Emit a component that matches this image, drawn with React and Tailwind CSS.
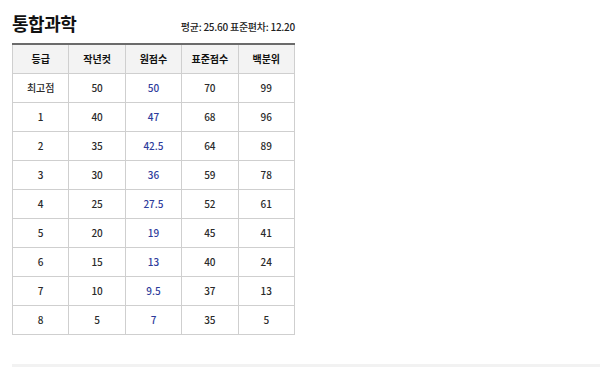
import React from 'react';

const rows = [
    ['최고점', '50', '50', '70', '99'],
    ['1', '40', '47', '68', '96'],
    ['2', '35', '42.5', '64', '89'],
    ['3', '30', '36', '59', '78'],
    ['4', '25', '27.5', '52', '61'],
    ['5', '20', '19', '45', '41'],
    ['6', '15', '13', '40', '24'],
    ['7', '10', '9.5', '37', '13'],
    ['8', '5', '7', '35', '5'],
];

const heads = ['등급', '작년컷', '원점수', '표준점수', '백분위'];

const App = () => {
    return (
        <div className="w-[600px] h-[367px] bg-white overflow-hidden font-['Noto_Sans_CJK_KR','Noto_Sans',sans-serif] text-[#222]">
            <div className="pl-3 w-[295px]">
                <div className="flex items-end justify-between h-[34px]">
                    <h2 className="text-[18px] font-bold leading-none tracking-tight text-[#111] mb-[2px]">통합과학</h2>
                    <p className="text-[10px] font-medium leading-none text-[#222] mb-[2px] tracking-tight">평균: 25.60 표준편차: 12.20</p>
                </div>
                <table className="mt-[9px] w-[283px] border-collapse table-fixed text-[10px] font-medium text-center">
                    <thead>
                        <tr className="bg-[#f3f3f3] border-t-2 border-t-[#6b6b6b] h-[29px]">
                            {heads.map((h) => (
                                <th key={h} className="border border-[#cfcfcf] border-t-[#6b6b6b] border-t-2 font-bold text-[#111]">{h}</th>
                            ))}
                        </tr>
                    </thead>
                    <tbody>
                        {rows.map((r) => (
                            <tr key={r[0]} className="h-[29px]">
                                {r.map((c, i) => (
                                    <td key={i} className={i === 2 ? 'border border-[#cfcfcf] text-[#2e3c9c]' : 'border border-[#cfcfcf] text-[#2a2a2a]'}>{c}</td>
                                ))}
                            </tr>
                        ))}
                    </tbody>
                </table>
            </div>
            <div className="ml-3 mt-[29px] h-[6px] bg-[#f2f2f2]"></div>
        </div>
    );
};

export default App;
